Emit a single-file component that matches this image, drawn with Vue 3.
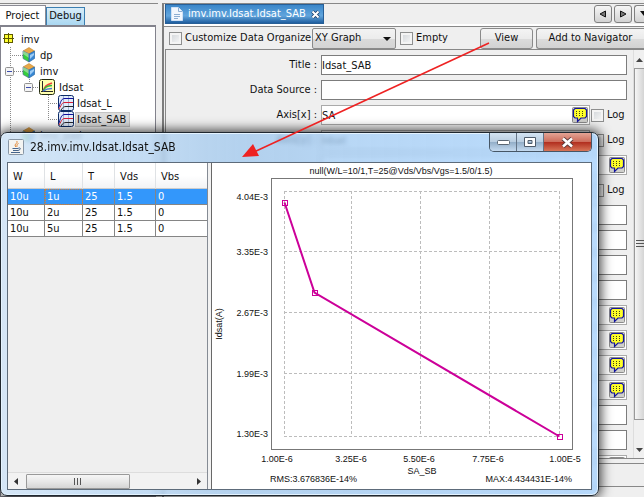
<script setup>
import { ref } from 'vue'

const tree = [
  { label: 'imv', depth: 0, icon: 'root' },
  { label: 'dp', depth: 1, icon: 'cube' },
  { label: 'imv', depth: 1, icon: 'cube', open: true },
  { label: 'Idsat', depth: 2, icon: 'graph', open: true },
  { label: 'Idsat_L', depth: 3, icon: 'curves' },
  { label: 'Idsat_SAB', depth: 3, icon: 'curves', selected: true },
  { label: 'imv_pad', depth: 1, icon: 'cube' }
]

const fields = ref([
  { label: 'Title :', value: 'Idsat_SAB' },
  { label: 'Data Source :', value: '' },
  { label: 'Axis[x] :', value: 'SA', note: true, log: true },
  { label: 'Axis[y] :', value: 'Idsat', note: true, log: true },
  { label: '', value: '', note: true },
  { label: '', value: '', note: true, log: true },
  { label: '', value: '' },
  { label: '', value: '' },
  { label: '', value: '' },
  { label: '', value: '' },
  { label: '', value: '', note: true },
  { label: '', value: '', note: true },
  { label: '', value: '', note: true },
  { label: '', value: '', note: true },
  { label: '', value: '' },
  { label: '', value: '' },
  { label: '', value: '', note: true }
])

const columns = ['W', 'L', 'T', 'Vds', 'Vbs']
const rows = [
  ['10u', '1u', '25', '1.5', '0'],
  ['10u', '2u', '25', '1.5', '0'],
  ['10u', '5u', '25', '1.5', '0']
]

const gridX = [72, 139, 208, 277, 347]
const gridY = [28, 88, 149, 210, 273]
const yTicks = [
  { y: 37, text: '4.04E-3' },
  { y: 92, text: '3.35E-3' },
  { y: 153, text: '2.67E-3' },
  { y: 214, text: '1.99E-3' },
  { y: 274, text: '1.30E-3' }
]
const xTicks = [
  { x: 65, text: '1.00E-6' },
  { x: 139, text: '3.25E-6' },
  { x: 207, text: '5.50E-6' },
  { x: 276, text: '7.75E-6' },
  { x: 353, text: '1.00E-5' }
]
const points = [[72.5, 39.5], [102.5, 129.5], [347.5, 273.5]]
</script>

<template>
  <div class="app">
    <aside class="side">
      <div class="side-tabs">
        <button class="side-tab current">Project</button>
        <button class="side-tab">Debug</button>
      </div>
      <div class="tree">
        <svg class="links" width="60" height="112" fill="none" stroke="#8a8a8a" stroke-dasharray="1 1">
          <path d="M9.5 16V112M9 24.500H22M9 40.500H22M28.500 48V56.500H38M47.500 64V88.500M47 72.500H58M47 88.500H58" />
        </svg>
        <div v-for="(n, i) in tree" :key="i" class="node" :class="'d' + n.depth">
          <svg v-if="n.open" class="toggle" width="9" height="9">
            <rect x=".5" y=".5" width="8" height="8" rx="1" fill="#f4f4f4" stroke="#919191" />
            <path d="M2 4.500h5" stroke="#3b4cae" />
          </svg>
          <svg v-if="n.icon === 'root'" class="icon" width="12" height="12">
            <rect x="1.500" y="1.500" width="8" height="8" fill="#ffff30" stroke="#5e5a00" />
            <path d="M5.500 0v11M0 5.500h11" stroke="#5e5a00" />
          </svg>
          <svg v-else-if="n.icon === 'cube'" class="icon" width="14" height="16">
            <path d="M1 4l6-3.500L12.500 4 7 7z" fill="#e8a848" stroke="#c08434" stroke-width=".6" />
            <path d="M1 4l6 3v8L1 11.500z" fill="#35cf3c" stroke="#54719b" stroke-width=".7" />
            <path d="M1 4l6 3v4L1 7z" fill="#cfe6d0" opacity=".55" />
            <path d="M7 7l5.500-3v7.500L7 15z" fill="#3787d4" stroke="#2968a8" stroke-width=".7" />
            <path d="M8 8l4-2v2L8 12z" fill="#9dccf5" />
          </svg>
          <svg v-else-if="n.icon === 'graph'" class="icon" width="16" height="16" fill="none">
            <rect x=".5" y=".5" width="15" height="15" rx="2" fill="#ffffae" stroke="#222a10" />
            <path d="M3.500 2v11M2 12.500h12" stroke="#26262a" />
            <path d="M4 12c2-5 3-6 9-8" stroke="#ef4040" stroke-width="1.400" />
            <path d="M4 12c2-4 4-5 9-5.500" stroke="#36b73a" stroke-width="1.400" />
            <path d="M4 12c3-2 4-2.500 9-2.500" stroke="#4775da" stroke-width="1.400" />
          </svg>
          <svg v-else class="icon" width="16" height="16" fill="none">
            <rect x=".5" y=".5" width="15" height="15" rx="2" fill="#e2ecfa" stroke="#0d2c68" />
            <path d="M5.500 1v14M10.500 1v14" stroke="#a3b7d5" />
            <path d="M1 12C3 5 4 3.500 7 3.500h8" stroke="#10109c" />
            <path d="M1 14c3-5 3-6.500 6-6.500h8" stroke="#d51c34" />
            <path d="M3 15c2-3 3-3.500 5-3.500h7" stroke="#26262a" />
          </svg>
          <span class="node-label" :class="{ selected: n.selected }">{{ n.label }}</span>
        </div>
      </div>
    </aside>

    <main class="editor">
      <header class="doc-tabs">
        <div class="doc-tab">
          <svg width="12" height="14">
            <path d="M.5.5h7l4 4v9H.5z" fill="#f2f7fd" stroke="#cfe1f5" />
            <path d="M7.500.500v4h4M3 7.500h6M3 9.500h6M3 11.500h4" fill="none" stroke="#8daed2" />
          </svg>
          <span>imv.imv.Idsat.Idsat_SAB</span>
          <button class="close-tab" aria-label="Close tab">
            <svg width="9" height="9"><path d="M1.500 1.500l6 6m0-6l-6 6" stroke="#1b3c66" stroke-width="3.600" /><path d="M1.500 1.500l6 6m0-6l-6 6" stroke="#fff" stroke-width="2" /></svg>
          </button>
        </div>
        <div class="nav-buttons">
          <button aria-label="Previous"><svg width="8" height="8"><path d="M6.500 1v6L1 4z" fill="#777" stroke="#111" /></svg></button>
          <button aria-label="Next"><svg width="8" height="8"><path d="M1.500 1v6L7 4z" fill="#777" stroke="#111" /></svg></button>
          <button class="cut" aria-label="List"><svg width="8" height="8"><path d="M0 1h8L4 6z" fill="#111" /></svg></button>
        </div>
      </header>

      <div class="toolbar">
        <label class="check"><input type="checkbox">Customize Data Organize</label>
        <span class="combo">
          <select aria-label="Graph type"><option>XY Graph</option></select>
          <svg width="8" height="4"><path d="M0 0h8L4 4z" fill="#111" /></svg>
        </span>
        <label class="check"><input type="checkbox">Empty</label>
        <button class="push view">View</button>
        <button class="push add">Add to Navigator</button>
      </div>

      <div class="form-area">
        <form class="form" @submit.prevent>
          <div v-for="(f, i) in fields" :key="i" class="field">
            <label class="caption" :for="'f' + i">{{ f.label }}</label>
            <div class="box" :class="{ soft: f.note }">
              <input :id="'f' + i" v-model="f.value" type="text">
              <button v-if="f.note" type="button" class="note" aria-label="Edit note">
                <svg width="16" height="16">
                  <rect x=".5" y=".5" width="15" height="15" rx="1" fill="#d0d0cc" stroke="#8b8b8b" />
                  <path d="M3 1.500h10l1.500 1.500v6.500L13 11h-4l-3.500 3.500V11H3L1.500 9.500V3z" fill="#ffff28" stroke="#1414a0" stroke-width="1.200" />
                  <path d="M4 4.500h8M4 6.500h8M4 8.500h8" stroke="#424216" stroke-dasharray="1 2" />
                </svg>
              </button>
            </div>
            <label v-if="f.log" class="check log"><input type="checkbox">Log</label>
          </div>
        </form>
        <div class="vbar">
          <svg class="arrow" width="7" height="4"><path d="M0 4h7L3.500 0z" fill="#444" /></svg>
          <div class="vthumb"><svg width="8" height="8"><path d="M0 .5h8M0 3.500h8M0 6.500h8" stroke="#555" /></svg></div>
          <svg class="arrow" width="7" height="4"><path d="M0 0h7L3.500 4z" fill="#444" /></svg>
        </div>
      </div>
      <div class="status"></div>
    </main>

    <section class="dialog">
      <header class="titlebar">
        <svg class="java" width="16" height="16" fill="none">
          <rect x=".5" y=".5" width="15" height="15" rx="1" fill="#f4f4f2" stroke="#8896a5" />
          <path d="M8.500 2C11 4 5 5 8 8M10.500 4.500C7.500 6 10 6.500 8.500 8" stroke="#e2832d" />
          <path d="M4.500 9.500h6M5 11.500h5M3 13.500h9M10.500 9c3-.5 2 2-.5 2.500" stroke="#46658c" />
        </svg>
        <h1>28.imv.imv.Idsat.Idsat_SAB</h1>
        <div class="win-buttons">
          <button aria-label="Minimize"><svg width="13" height="5"><rect x=".5" y=".5" width="12" height="4" rx="1" fill="#fff" stroke="#5a6673" /></svg></button>
          <button aria-label="Maximize"><svg width="12" height="10"><path d="M.5.500h11v9H.5zM4 3.500v3h4v-3z" fill="#fff" fill-rule="evenodd" stroke="#4f5c6b" /></svg></button>
          <button class="quit" aria-label="Close"><svg width="13" height="11"><path d="M2 1.500l9 8m0-8l-9 8" stroke="#5c3a3a" stroke-width="4.400" /><path d="M2 1.500l9 8m0-8l-9 8" stroke="#fff" stroke-width="2.600" /></svg></button>
        </div>
      </header>

      <div class="dialog-body">
        <div class="table-pane">
          <table>
            <colgroup><col class="c1"><col class="c2"><col class="c3"><col class="c4"><col></colgroup>
            <thead><tr><th v-for="c in columns" :key="c">{{ c }}</th></tr></thead>
            <tbody>
              <tr v-for="(r, i) in rows" :key="i" :class="{ active: i === 0 }">
                <td v-for="(c, j) in r" :key="j" :class="{ focus: i === 0 && j === 1 }">{{ c }}</td>
              </tr>
            </tbody>
          </table>
          <div class="hbar">
            <svg width="4" height="7"><path d="M4 0v7L0 3.500z" fill="#333" /></svg>
            <div class="htrack"><div class="hthumb"><svg width="8" height="7"><path d="M.5 0v7M3.500 0v7M6.500 0v7" stroke="#555" /></svg></div></div>
            <svg width="4" height="7"><path d="M0 0v7l4-3.500z" fill="#333" /></svg>
          </div>
        </div>
        <div class="splitter"></div>
        <div class="chart-pane">
          <svg class="chart" viewBox="0 0 379 326" preserveAspectRatio="xMinYMin meet">
            <rect x="59.500" y="15.500" width="301" height="271" fill="#fff" stroke="#777" />
            <g stroke="#bcbcbc" stroke-dasharray="3 2">
              <path v-for="x in gridX" :key="'x' + x" :d="`M${x + 0.5} 28V273`" />
              <path v-for="y in gridY" :key="'y' + y" :d="`M72 ${y + 0.5}H347`" />
            </g>
            <polyline :points="points.map(p => p.join(',')).join(' ')" fill="none" stroke="#cc0099" stroke-width="2" />
            <rect v-for="p in points" :key="p[0]" :x="p[0] - 2" :y="p[1] - 2" width="5" height="5" fill="none" stroke="#cc0099" />
            <text x="189" y="11" text-anchor="middle">null(W/L=10/1,T=25@Vds/Vbs/Vgs=1.5/0/1.5)</text>
            <text v-for="t in yTicks" :key="t.text" x="56" :y="t.y" text-anchor="end">{{ t.text }}</text>
            <text v-for="t in xTicks" :key="t.text" :x="t.x" y="299" text-anchor="middle">{{ t.text }}</text>
            <text x="210" y="311" text-anchor="middle">SA_SB</text>
            <text x="58" y="319">RMS:3.676836E-14%</text>
            <text x="360" y="319" text-anchor="end">MAX:4.434431E-14%</text>
            <text transform="translate(10 161) rotate(-90)" text-anchor="middle">Idsat(A)</text>
          </svg>
        </div>
      </div>
    </section>

    <svg class="pointer" width="260" height="120">
      <path d="M249 1L14 110" stroke="#ee2222" stroke-width="1.600" />
      <path d="M2 115l11-13 6 12z" fill="#ee2222" />
    </svg>
  </div>
</template>

<style>
body { background: #efefef; }
</style>

<style scoped>
.app {
  position: relative;
  display: flex;
  min-height: 100vh;
  overflow: hidden;
  background: #efefef;
  color: #111;
  font: 11px/16px "DejaVu Sans Condensed", Tahoma, "DejaVu Sans", sans-serif;
}
.app *, .app *::before { box-sizing: border-box; }
button, input, select { font: inherit; color: inherit; margin: 0; padding: 0; border-radius: 0; }
svg { display: block; flex: none; }

.side { width: 162px; flex: none; display: flex; flex-direction: column; padding-top: 3px; }
.side::before { content: ""; height: 1px; margin-right: 4px; background: #888; }
.side-tabs { display: flex; align-items: flex-end; height: 21px; }
.side-tab { height: 18px; width: 39px; border: 1px solid #3c7fb1; border-bottom: 0; background: linear-gradient(#d9edf9, #a9d7f1); white-space: nowrap; display: flex; justify-content: center; }
.side-tab.current { position: relative; width: 46px; height: 23px; margin-bottom: -3px; border-color: #8b8b95; border-left: 0; background: #fff; padding-top: 2px; }
.tree { position: relative; flex: 1; margin-right: 6px; padding-top: 4px; background: #fff; border: 1px solid #82828c; border-top-width: 2px; }
.links { position: absolute; left: 0; top: 4px; }
.node { position: relative; display: flex; align-items: center; height: 16px; gap: 4px; white-space: nowrap; }
.d0 { padding-left: 2px; }
.d1 { padding-left: 21px; gap: 2px; }
.d2 { padding-left: 38px; }
.d3 { padding-left: 57px; gap: 1px; }
.toggle { position: absolute; left: 4px; }
.d2 .toggle { left: 23px; }
.node-label { padding: 0 2px; line-height: 15px; }
.d2 .node-label { padding: 0; }
.node-label.selected { background: #dcdcdc; outline: 1px solid #c4c4c4; outline-offset: -1px; padding-right: 4px; }

.editor { flex: 1; min-width: 0; display: flex; flex-direction: column; margin-top: 3px; border-left: 2px solid #7d7d7d; border-top: 1px solid #888; }
.doc-tabs { display: flex; justify-content: space-between; height: 22px; border-bottom: 2px solid #fff; }
.doc-tab { display: flex; align-items: center; gap: 5px; height: 20px; margin-left: 1px; padding: 0 3px 0 5px; background: linear-gradient(#3a86c9, #61a5dd 60%, #1f5e9f); border: 1px solid #275f97; color: #fff; }
.close-tab { background: none; border: 0; }
.nav-buttons { display: flex; gap: 2px; padding-top: 1px; }
.nav-buttons button { display: flex; align-items: center; justify-content: center; width: 18px; height: 18px; border: 1px solid #808080; border-radius: 3px; background: linear-gradient(#f6f6f6, #d2d2d2); }
.nav-buttons .cut { width: 10px; border-right: 0; border-radius: 3px 0 0 3px; justify-content: flex-start; padding-left: 5px; overflow: hidden; }
.toolbar { display: flex; align-items: center; height: 23px; padding-left: 5px; border-top: 1px solid #888; white-space: nowrap; }
.check { display: flex; align-items: center; gap: 3px; }
.check input { appearance: none; flex: none; width: 13px; height: 13px; border: 1px solid #8e8f8f; background: linear-gradient(135deg, #cfd3d7, #fafafa); outline: 2px solid #f4f4f4; outline-offset: -3px; }
.combo { position: relative; width: 84px; margin-right: 4px; }
.combo select { appearance: none; display: block; width: 100%; height: 21px; padding-left: 2px; border: 1px solid #8a8a8a; border-radius: 2px; background: linear-gradient(#f3f3f3, #ececec 50%, #dadada 51%, #d4d4d4); }
.combo svg { position: absolute; right: 5px; top: 9px; pointer-events: none; }
.toolbar > .check:first-child { width: 143px; }
.push { height: 21px; border: 1px solid #8a8a8a; border-radius: 3px; background: linear-gradient(#f4f4f4, #ebebeb 50%, #dcdcdc 51%, #d2d2d2); }
.view { width: 53px; margin-left: auto; margin-right: 3px; }
.add { width: 108px; border-right: 0; border-radius: 3px 0 0 3px; }

.form-area { flex: 1 1 0; min-height: 0; display: flex; margin-left: 1px; border: 1px solid #888; border-width: 1px 0 1px 1px; overflow: hidden; }
.form { flex: 1; min-width: 0; height: 408px; padding: 5px 6px 0 0; display: flex; flex-direction: column; gap: 5px; overflow: hidden; }
.field { display: flex; align-items: center; flex: none; height: 20px; }
.caption { width: 155px; flex: none; padding-right: 4px; text-align: right; }
.box { flex: 1; min-width: 0; height: 20px; display: flex; align-items: center; background: #fff; border: 1px solid #7c7c7c; }
.box.soft { border-color: #aaa; }
.box input { flex: 1; min-width: 0; height: 18px; border: 0; background: none; outline: 0; }
.note { border: 0; background: none; margin-right: 1px; }
.log { width: 37px; padding-left: 1px; flex: none; }
.vbar { width: 11px; flex: none; display: flex; flex-direction: column; align-items: center; gap: 6px; padding: 8px 0 6px; background: #f0f0f0; border-left: 1px solid #ddd; }
.vthumb { width: 11px; flex: 0 1 352px; display: flex; align-items: center; justify-content: center; border: 1px solid #999; border-right: 0; background: linear-gradient(90deg, #f6f6f6, #d0d0d0); }
.vbar .arrow:last-child { margin-top: auto; }
.status { height: 24px; margin: 4px 0 10px; border: 1px solid #888; border-width: 1px 0; }

.dialog { position: absolute; left: 0; right: 45px; top: 132px; bottom: 1px; display: flex; flex-direction: column; padding: 0 6px 5px; border: 1px solid #202830; border-radius: 7px; background: linear-gradient(90deg, rgba(206, 226, 245, .85), rgba(160, 200, 238, .75) 40%, rgba(172, 212, 252, .85)); box-shadow: inset 0 0 0 1px #e4f3ff, 0 0 12px 2px rgba(0, 0, 0, .75); backdrop-filter: blur(2px); }
.titlebar { display: flex; align-items: flex-start; height: 29px; }
.java { margin: 6px 6px 0 1px; }
h1 { margin: 6px 0 0; font: 12px/16px "DejaVu Sans Condensed", Tahoma, "DejaVu Sans", sans-serif; white-space: nowrap; }
.win-buttons { display: flex; margin-left: auto; border: 1px solid #465666; border-top: 0; border-radius: 0 0 5px 5px; overflow: hidden; }
.win-buttons button { display: flex; align-items: center; justify-content: center; width: 27px; height: 18px; border: 0; border-right: 1px solid #637386; background: linear-gradient(#d4e4f3, #b9cde0 48%, #92adc7 50%, #c4daf0); }
.win-buttons .quit { width: 47px; border-right: 0; background: linear-gradient(#e3a495, #cd6d5c 48%, #b02c1d 50%, #d77558); }
.dialog-body { flex: 1; min-height: 0; display: flex; border: 1px solid #5d6b7a; background: #efefef; }
.table-pane { width: 200px; flex: none; display: flex; flex-direction: column; border-right: 1px solid #858b94; }
table { width: 100%; table-layout: fixed; border-collapse: separate; border-spacing: 0; }
.c1 { width: 37px; }
.c2 { width: 38px; }
.c3 { width: 32px; }
.c4 { width: 41px; }
th { height: 26px; padding: 2px 0 0 5px; text-align: left; font-weight: normal; background: linear-gradient(#fff 50%, #f2f3f5); border-right: 1px solid #dfe2e5; border-bottom: 1px solid #ccc; }
td { height: 16px; padding: 0 0 0 2px; line-height: 15px; background: #fff; border-right: 1px solid #858585; border-bottom: 1px solid #858585; }
th:last-child, td:last-child { border-right: 0; }
.active td { background: #3397fb; color: #fff; }
.active td.focus { outline: 1px dotted #c98045; outline-offset: -1px; }
.hbar { display: flex; align-items: center; height: 17px; margin-top: auto; padding: 0 6px; gap: 8px; border-top: 1px solid #ddd; background: #f2f2f2; }
.htrack { flex: 1; }
.hthumb { width: 64%; height: 15px; display: flex; align-items: center; justify-content: center; border: 1px solid #999; border-radius: 1px; background: linear-gradient(#f6f6f6, #e8e8e8 50%, #d5d5d5); }
.splitter { width: 4px; flex: none; background: #f2f2f2; border-right: 1px solid #686868; }
.chart-pane { flex: 1; min-width: 0; background: #fff; overflow: hidden; }
.chart { width: 100%; height: 100%; font: 9px "Liberation Sans", Arial, sans-serif; fill: #111; }

.pointer { position: absolute; left: 240px; top: 42px; fill: none; pointer-events: none; }
</style>
